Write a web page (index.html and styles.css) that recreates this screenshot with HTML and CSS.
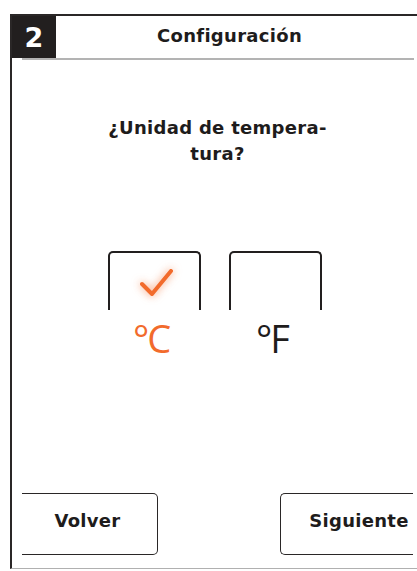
FILE: index.html
```html
<!DOCTYPE html>
<html lang="es">
<head>
  <meta charset="UTF-8">
  <title>Configuración</title>
  <link rel="stylesheet" href="styles.css">
</head>
<body>
  <div class="screen">
    <header class="topbar">
      <div class="step">2</div>
      <h1 class="title">Configuración</h1>
    </header>
    <div class="divider"></div>

    <main class="content">
      <p class="question">¿Unidad de tempera-<br>tura?</p>

      <div class="options">
        <div class="option selected">
          <div class="box">
            <svg class="check" width="93" height="59" viewBox="0 0 93 59">
              <polyline points="34,33 44,43 63,20" fill="none" stroke="#f26b2c" stroke-width="4" stroke-linecap="round" stroke-linejoin="round"/>
            </svg>
          </div>
          <span class="unit">°C</span>
        </div>
        <div class="option">
          <div class="box"></div>
          <span class="unit">°F</span>
        </div>
      </div>
    </main>

    <footer class="nav">
      <button class="btn back">Volver</button>
      <button class="btn next">Siguiente</button>
    </footer>
  </div>
</body>
</html>
```

FILE: styles.css
```css
body {
  margin: 0;
  background: #ffffff;
  font-family: 'DejaVu Sans', sans-serif;
  color: #1e1c1c;
}

.screen {
  margin: 14px 0 0 10px;
  height: 555px;
  box-sizing: border-box;
  border-top: 2px solid #2a2727;
  border-left: 2px solid #2a2727;
  border-bottom: 1px solid #b0b0b0;
  display: flex;
  flex-direction: column;
}

.topbar {
  display: flex;
  height: 42px;
}

.step {
  width: 44px;
  background: #221f1f;
  color: #ffffff;
  font-size: 27px;
  font-weight: bold;
  display: flex;
  align-items: center;
  justify-content: center;
}

.title {
  flex: 1;
  margin: 0;
  font-size: 18px;
  font-weight: bold;
  letter-spacing: 0.3px;
  text-align: center;
  line-height: 40px;
  padding-right: 14px;
}

.divider {
  height: 2px;
  background: #b3b3b3;
  margin: 0 3px 0 10px;
}

.content {
  flex: 1;
  display: flex;
  flex-direction: column;
  align-items: center;
}

.question {
  margin: 55px 0 0 6px;
  font-size: 18px;
  font-weight: bold;
  letter-spacing: 0.3px;
  line-height: 26px;
  text-align: center;
}

.options {
  display: flex;
  gap: 28px;
  margin-top: 84px;
}

.option {
  display: flex;
  flex-direction: column;
  align-items: center;
}

.box {
  width: 93px;
  height: 59px;
  box-sizing: border-box;
  border: 2px solid #221f1f;
  border-bottom: none;
  border-radius: 5px 5px 0 0;
}

.check {
  display: block;
  margin: -2px;
  filter: drop-shadow(0 0 4px rgba(242, 107, 44, 0.7));
}

.unit {
  font-family: 'Open Sans', sans-serif;
  font-size: 38px;
  line-height: 50px;
  margin: 3px 6px 0 0;
  letter-spacing: -2px;
  color: #1e1c1c;
}

.selected .unit {
  color: #f26b2c;
}

.nav {
  display: flex;
  justify-content: space-between;
  padding: 0 4px 13px 10px;
}

.btn {
  width: 136px;
  height: 62px;
  background: #ffffff;
  font-family: 'DejaVu Sans', sans-serif;
  font-size: 18px;
  font-weight: bold;
  letter-spacing: 0.3px;
  color: #1e1c1c;
  border: 1.5px solid #2a2727;
  padding: 0 0 8px;
}

.back {
  border-left: none;
  border-radius: 0 5px 5px 0;
  padding-right: 4px;
}

.next {
  width: 133px;
  border-right: none;
  border-radius: 5px 0 0 5px;
  padding-left: 24px;
}
```
